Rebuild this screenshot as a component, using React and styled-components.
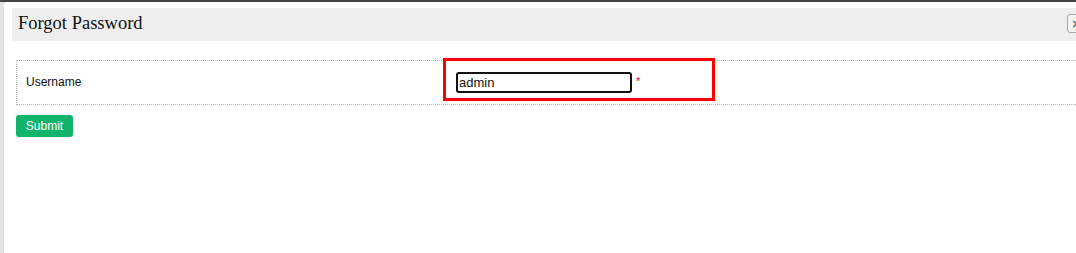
import React from "react";
import styled, { createGlobalStyle } from "styled-components";

const Global = createGlobalStyle`
  html, body { margin: 0; padding: 0; }
  body {
    background: #e3e3e3;
    border-top: 2px solid #444;
    width: 1076px;
    height: 251px;
    overflow: hidden;
    font-family: "Liberation Sans", Arial, sans-serif;
  }
`;

const Window = styled.div`
  margin-left: 4px;
  height: 251px;
  background: #fff;
  border-top-left-radius: 4px;
  padding: 6px 0 0 8px;
  box-sizing: border-box;
  overflow: hidden;
`;

const Header = styled.div`
  height: 33px;
  background: #eeeeee;
  display: flex;
  align-items: center;
  padding-left: 6px;
  position: relative;
`;

const Title = styled.h1`
  margin: 0;
  font-family: "Liberation Serif", "Times New Roman", serif;
  font-weight: normal;
  font-size: 18.5px;
  color: #111;
  padding-bottom: 2px;
`;

const CloseBtn = styled.button`
  position: absolute;
  left: 1055px;
  top: 6px;
  width: 24px;
  height: 19px;
  border: 1px solid #a8a8a8;
  border-radius: 3px;
  background: #f4f4f4;
  color: #777;
  font-size: 13px;
  font-weight: bold;
  line-height: 15px;
  padding: 0 0 0 3px;
  text-align: left;
  font-family: "DejaVu Sans", sans-serif;
`;

const Body = styled.div`
  padding: 19px 0 0 4px;
`;

const Table = styled.div`
  width: 1100px;
  border: 1px dotted #b5b5b5;
  display: flex;
  height: 45px;
  box-sizing: border-box;
`;

const LabelCell = styled.div`
  width: 429px;
  box-sizing: border-box;
  padding: 0 0 1px 9px;
  display: flex;
  align-items: center;
  font-size: 12px;
  color: #111;
`;

const FieldCell = styled.div`
  position: relative;
  display: flex;
  align-items: center;
  padding: 0 0 1px 10px;
  gap: 4px;
`;

const Highlight = styled.div`
  position: absolute;
  left: -3px;
  top: -3px;
  width: 272px;
  height: 43px;
  border: 3px solid #ff0000;
  box-sizing: border-box;
  pointer-events: none;
`;

const Input = styled.input`
  width: 176px;
  height: 21px;
  box-sizing: border-box;
  border: 2px solid #111;
  border-radius: 3px;
  padding: 0 1px;
  font-family: "Liberation Sans", Arial, sans-serif;
  font-size: 13px;
  color: #111;
  outline: none;
`;

const Required = styled.span`
  color: #d0021b;
  font-size: 11px;
  margin-top: -2px;
`;

const Submit = styled.button`
  margin-top: 10px;
  width: 57px;
  height: 22px;
  border: none;
  border-radius: 3px;
  background: #12b46b;
  color: #fff;
  font-family: "Liberation Sans", Arial, sans-serif;
  font-size: 12px;
  padding: 0;
`;

export default function App() {
  return (
    <>
      <Global />
      <Window>
        <Header>
          <Title>Forgot Password</Title>
          <CloseBtn aria-label="close">×</CloseBtn>
        </Header>
        <Body>
          <Table>
            <LabelCell>Username</LabelCell>
            <FieldCell>
              <Highlight />
              <Input defaultValue="admin" />
              <Required>*</Required>
            </FieldCell>
          </Table>
          <Submit>Submit</Submit>
        </Body>
      </Window>
    </>
  );
}
